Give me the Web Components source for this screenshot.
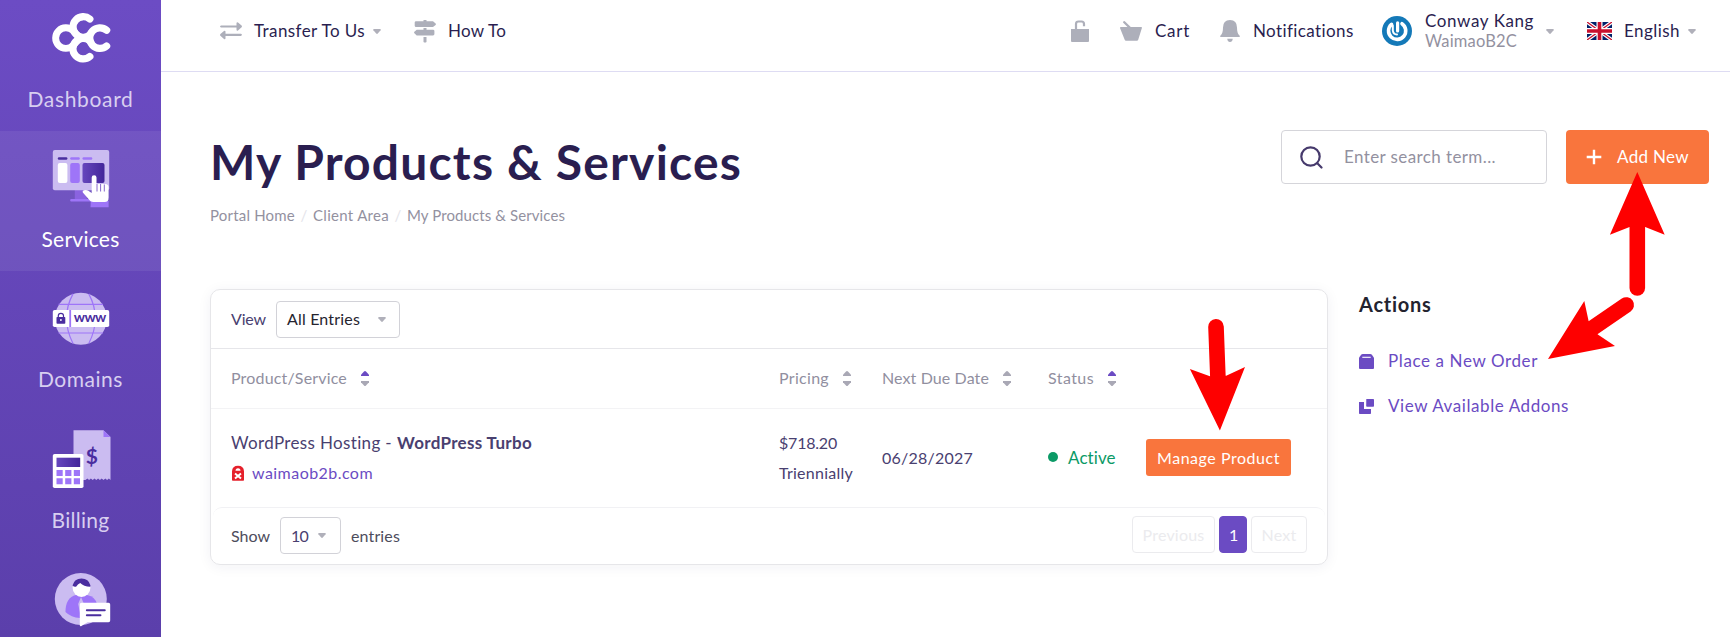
<!DOCTYPE html>
<html lang="en">
<head>
<meta charset="utf-8">
<title>My Products &amp; Services</title>
<style>
  body {
    margin: 0;
    background: #fff;
    font-family: Lato, "Open Sans", sans-serif;
    font-size: 17px;
    color: #2a1e50;
  }
</style>
</head>
<body>
<client-portal></client-portal>

<script>
// Single line of text tracked out to a set width
class UiText extends HTMLElement {
  connectedCallback() {
    this.attachShadow({ mode: 'open' });
    this.shadowRoot.innerHTML = `
      <style>
        :host { display: block; flex: none; line-height: 26px; }
        span { display: inline-block; vertical-align: top; white-space: pre; }
      </style>
      <span><slot></slot></span>
    `;
    const width = parseFloat(this.getAttribute('width'));
    const natural = this.shadowRoot.querySelector('span').getBoundingClientRect().width;
    const count = this.textContent.length;
    this.style.letterSpacing = ((width - natural) / count).toFixed(3) + 'px';
    this.style.width = width + 'px';
  }
}

class UiCaret extends HTMLElement {
  connectedCallback() {
    this.attachShadow({ mode: 'open' });
    this.shadowRoot.innerHTML = `
      <style>
        :host { display: block; flex: none; width: 8px; height: 5px; }
        svg { display: block; }
      </style>
      <svg width="8" height="5" viewBox="0 0 8 5"><path d="M.9 0h6.2q1 .2.5 1.2L4.8 4.5q-.8.8-1.6 0L.4 1.2Q-.1.2.9 0z" fill="#b0b0ba"/></svg>
    `;
  }
}

class SortArrows extends HTMLElement {
  connectedCallback() {
    const up = this.hasAttribute('active') ? '#6b4bc3' : '#a9a8b5';
    this.attachShadow({ mode: 'open' });
    this.shadowRoot.innerHTML = `
      <style>
        :host { display: block; flex: none; width: 8px; height: 15px; }
        svg { display: block; }
      </style>
      <svg width="8" height="15" viewBox="0 0 8 15">
        <path d="M0 5V3.8L3 .6q1-1 2 0l3 3.2V5z" fill="${up}"/>
        <path d="M0 10v1.2l3 3.2q1 1 2 0l3-3.2V10z" fill="#a9a8b5"/>
      </svg>
    `;
  }
}

const navIcons = {
  dashboard: `
    <g fill="none" stroke="#fff" stroke-width="7.3" stroke-linecap="round">
      <path d="M22 21.6A10.3 10.3 0 1 0 22 36.600Q25.800 32.400 29 29.100 25.800 25.800 22 21.600z" stroke-linejoin="round" stroke-width="6.900"/>
      <path d="M38.8 10A10.3 10.3 0 1 0 38.6 26.2"/>
      <path d="M38.6 31.600A10.3 10.3 0 1 0 38.8 47.500"/>
      <path d="M55.6 21.200A10.3 10.3 0 1 0 55.6 37"/>
    </g>`,
  services: `
    <rect x="23.8" y="41" width="12" height="10" fill="#8a63e0"/>
    <rect x="19.2" y="50" width="26" height="2.4" rx="1" fill="#9e75f8"/>
    <rect x="1.8" y="1" width="56.4" height="40.3" rx="2" fill="#cbbcf1"/>
    <rect x="6.8" y="8.2" width="9.6" height="2.6" rx="1.2" fill="#4a2d9f"/>
    <rect x="19.2" y="8.2" width="9.6" height="2.6" rx="1.2" fill="#9e75f8"/>
    <rect x="31.5" y="8.2" width="9.8" height="2.6" rx="1.2" fill="#9e75f8"/>
    <rect x="6.8" y="14" width="9.6" height="20" rx="2" fill="#fff"/>
    <rect x="19.2" y="14" width="9.6" height="20" rx="2" fill="#9e75f8"/>
    <rect x="31.5" y="14" width="22" height="20" rx="2" fill="url(#dark)"/>
    <path d="M39.8 52h17.8v6.3H39.5z" fill="#9e75f8"/>
    <path d="M40.7 28.6a2.4 2.4 0 0 1 4.8 0V35h8.7q3.4.4 3.4 3v10.5q0 4.6-4 4.6H42.5q-3 0-5.4-3.6L31.8 43.5q-.8-1.7 1.2-2.2 3.5-1 5.8 1.5l1.9 1.2z" fill="#fff"/>
    <path d="M46 35v7.5M49.6 35v7.5M53.3 35.5v7" stroke="#7a58c6" stroke-width=".9"/>`,
  domains: `
    <circle cx="29.8" cy="29.7" r="26" fill="#cbbcf1"/>
    <path d="M7.600 15.3h44.400M7.600 44h44.400M22 4.900q-13 24 0 49.600M37.800 4.900q13 24 0 49.600" fill="none" stroke="#9e75f8" stroke-width="1.2"/>
    <rect x="1.8" y="21" width="56.4" height="17" rx="1.8" fill="#fff"/>
    <path d="M19.200 21v17" stroke="#9e75f8" stroke-width="1.8"/>
    <rect x="5.5" y="28" width="8.8" height="6.7" rx=".8" fill="#4a2d9f"/>
    <path d="M7.300 28.500V26.700a2.600 2.400 0 0 1 5.200 0v1.800" fill="none" stroke="#4a2d9f" stroke-width="1.2"/>
    <circle cx="9.9" cy="31" r=".9" fill="#fff"/>
    <text x="22.8" y="32.7" textLength="32.5" font-family="Lato, sans-serif" font-size="14" font-weight="700" fill="#4a2d9f">www</text>`,
  billing: `
    <path d="M22.500.3h30L59.500 7v43l-1.600-1.400-1.800 1.400-1.800-1.400-1.800 1.400-1.800-1.400-1.800 1.400-1.800-1.400-1.800 1.400-1.800-1.400-1.800 1.400-1.800-1.400-1.800 1.400-1.800-1.400-1.800 1.400H22.500z" fill="#cbbcf1"/>
    <path d="M52.500.3v6.700h7z" fill="#9e75f8"/>
    <text x="40.9" y="33.7" text-anchor="middle" font-family="Lato, sans-serif" font-size="21" font-weight="700" fill="#4a2d9f">$</text>
    <rect x="1.8" y="24" width="30.7" height="34" rx="1.8" fill="#fff"/>
    <rect x="5.5" y="27.7" width="23.7" height="9.3" fill="url(#dark)"/>
    <path d="M5.500 40h6.200v6H5.500zm8.700 0h6.200v6h-6.200zm8.600 0H29v6h-6.200zM5.500 48.200h6.200v6H5.500zm8.700 0h6.200v6h-6.200zm8.600 0H29v6h-6.200z" fill="#9e75f8"/>`,
  support: `
    <circle cx="29.8" cy="29" r="26" fill="#cbbcf1"/>
    <path d="M14.500 42q0-14.500 10.500-17h11q9 1.800 10.300 10L29 48Q20 47.500 14.500 42z" fill="#9e75f8"/>
    <path d="M30 27l3 7-3 14-2.800-14z" fill="#cbbcf1"/>
    <circle cx="30.5" cy="18" r="8.9" fill="#fff"/>
    <path d="M21.500 15.500q1.800-6.700 9-6.900 7.200.2 9 6.900l-.3 1.200q-6.500-.2-10-3.700-2.600 1.200-3.900 3.500-2 .8-3.800-1z" fill="#4a2d9f"/>
    <path d="M30.500 32.700h27q1.700.1 1.700 1.700v16.200q0 1.700-1.700 1.700H36.500L30 56.300q-1.200.2-1.200-1V34.400q0-1.600 1.700-1.700z" fill="#fff"/>
    <path d="M35.800 40.300h18M35.800 45.300h13.700" stroke="#4a2d9f" stroke-width="1.9" stroke-linecap="round"/>`
};

class NavItem extends HTMLElement {
  connectedCallback() {
    this.attachShadow({ mode: 'open' });
    this.shadowRoot.innerHTML = `
      <style>
        :host {
          display: flex;
          flex-direction: column;
          align-items: center;
          flex: none;
          box-sizing: border-box;
          height: 139.4px;
          margin-bottom: 1px;
          padding-top: 17.5px;
          font-size: 21px;
          color: #d8cff0;
        }
        :host([active]) { background: rgba(255, 255, 255, .07); color: #fff; }
        svg { display: block; flex: none; margin-bottom: 17px; }
      </style>
      <svg width="60" height="60" viewBox="0 0 60 60">
        <defs><linearGradient id="dark"><stop stop-color="#6647bd"/><stop offset="1" stop-color="#43269a"/></linearGradient></defs>
        ${navIcons[this.getAttribute('icon')]}
      </svg>
      <slot></slot>
    `;
  }
}

class SideNav extends HTMLElement {
  connectedCallback() {
    this.attachShadow({ mode: 'open' });
    this.shadowRoot.innerHTML = `
      <style>
        :host {
          display: flex;
          flex-direction: column;
          height: 637px;
          overflow: hidden;
          background: linear-gradient(#6c4cc4, #5b3fab);
        }
        .first { margin-top: -9px; }
      </style>
      <nav-item class="first" icon="dashboard"><ui-text width="106">Dashboard</ui-text></nav-item>
      <nav-item icon="services" active><ui-text width="78">Services</ui-text></nav-item>
      <nav-item icon="domains"><ui-text width="85">Domains</ui-text></nav-item>
      <nav-item icon="billing"><ui-text width="58">Billing</ui-text></nav-item>
      <nav-item icon="support"></nav-item>
    `;
  }
}

class TopBar extends HTMLElement {
  connectedCallback() {
    this.attachShadow({ mode: 'open' });
    this.shadowRoot.innerHTML = `
      <style>
        :host {
          display: flex;
          align-items: center;
          justify-content: space-between;
          box-sizing: border-box;
          height: 72px;
          padding: 0 34px 9px 59px;
          border-bottom: 1px solid #dedcf3;
        }
        div { display: flex; align-items: center; }
        svg { display: block; flex: none; fill: #adafba; }
        .user { flex-direction: column; align-items: flex-start; }
        .user ui-text { line-height: 20px; }
        .muted { color: #93919f; font-size: 16.5px; }
      </style>
      <div>
        <svg width="22" height="18" viewBox="0 0 22 18">
          <path d="M1 3.400h15.500V1q.3-1.300 1.500-.6l3.600 3.200q.7.900 0 1.600L18 8.400q-1.300.7-1.500-.6V5.600H1Q-.9 4.500 1 3.400zM21 11.700H5.500V9.500q-.3-1.300-1.500-.6L.4 12q-.7.900 0 1.700L4 17q1.200.8 1.500-.5v-2.600H21q1.900-1.100 0-2.200z"/>
        </svg>
        <ui-text width="111" style="margin-left:12px">Transfer To Us</ui-text>
        <ui-caret style="margin-left:8px"></ui-caret>
        <svg style="margin-left:33px" width="22" height="23" viewBox="0 0 22 23">
          <path d="M9.500 0h3v1.300h6.500l2.600 2.200q.7.700 0 1.400L19 7H2Q.7 7 .7 5.700V2.600q0-1.300 1.300-1.300h7.500zM9.500 8h3v1.700H19q1.400 0 1.400 1.400v3q0 1.400-1.400 1.400H2.700L.4 13.200q-.7-.7 0-1.400l2.300-2.100h6.800zM9.500 17h3v5q-1.500 1.200-3 0z"/>
        </svg>
        <ui-text width="58" style="margin-left:12px">How To</ui-text>
      </div>
      <div>
        <svg width="18" height="22" viewBox="0 0 18 22">
          <path d="M0 9h18v12q0 1-1 1H1q-1 0-1-1z"/>
          <path d="M5 9.500V4q0-2.500 2.500-2.500h3q2.500 0 2.500 2.500v2.300" fill="none" stroke="#adafba" stroke-width="2.2"/>
        </svg>
        <svg style="margin-left:31px" width="22" height="20" viewBox="0 0 22 20">
          <path d="M.8 6h6.700L3 1.600Q3-.3 4.800.2L10.800 6h10.400q1 .1.700 1l-3.700 11.800q-.3 1-1.300 1H6q-1 0-1.300-1L0 7q-.1-1 .8-1z"/>
        </svg>
        <ui-text width="35" style="margin-left:13px">Cart</ui-text>
        <svg style="margin-left:30px" width="20" height="22" viewBox="0 0 20 22">
          <path d="M10 0q7 .3 7 7.500c0 4 .8 6.500 2.500 8q.8 1.500-.5 1.500H1q-1.300 0-.5-1.500c1.700-1.500 2.500-4 2.500-8Q3 .3 10 0zM7.300 18.700h5.400q0 3-2.700 3.200-2.700-.2-2.700-3.200z"/>
        </svg>
        <ui-text width="101" style="margin-left:13px">Notifications</ui-text>
        <svg style="margin-left:28px" width="30" height="30" viewBox="0 0 30 30">
          <circle cx="15" cy="15" r="15" fill="#1479b8"/>
          <path d="M9.500 8.300A8.600 8.600 0 1 0 20 7.700" fill="none" stroke="#fff" stroke-width="3.6" stroke-linecap="round"/>
          <path d="M10.800 9.500v5q.5 4 4.200 4" fill="none" stroke="#fff" stroke-width="2" stroke-linecap="round"/>
          <path d="M15.600 6.800v8.200" stroke="#fff" stroke-width="3.2" stroke-linecap="round"/>
        </svg>
        <div class="user" style="margin-left:13px">
          <ui-text width="109">Conway Kang</ui-text>
          <ui-text class="muted" width="92">WaimaoB2C</ui-text>
        </div>
        <ui-caret style="margin-left:12px"></ui-caret>
        <svg style="margin-left:33px" width="25" height="18" viewBox="0 0 25 18">
          <rect width="25" height="18" rx="1.5" fill="#012169"/>
          <path d="M0 0l25 18M25 0L0 18" stroke="#fff" stroke-width="3.6"/>
          <path d="M0 0l25 18M25 0L0 18" stroke="#c8102e" stroke-width="1.3"/>
          <path d="M12.500 0v18M0 9h25" stroke="#fff" stroke-width="6"/>
          <path d="M12.500 0v18M0 9h25" stroke="#c8102e" stroke-width="3.6"/>
        </svg>
        <ui-text width="56" style="margin-left:12px">English</ui-text>
        <ui-caret style="margin-left:8px"></ui-caret>
      </div>
    `;
  }
}

class PageHeader extends HTMLElement {
  connectedCallback() {
    this.attachShadow({ mode: 'open' });
    this.shadowRoot.innerHTML = `
      <style>
        :host {
          display: flex;
          justify-content: space-between;
          padding: 58px 21px 0 49px;
        }
        h1 { margin: 3px 0 0; font-size: 48px; line-height: 58px; }
        h1 ui-text { line-height: 58px; }
        .crumbs { display: flex; margin-top: 11px; font-size: 15px; color: #93919f; }
        .crumbs i { width: 18px; text-align: center; line-height: 26px; font-style: normal; color: #e4e4ea; }
        .tools { display: flex; gap: 19px; }
        .search, .add {
          display: flex;
          align-items: center;
          box-sizing: border-box;
          height: 54px;
          border-radius: 4px;
        }
        .search { width: 266px; padding-left: 18px; border: 1px solid #d5d5da; color: #93919f; gap: 21px; }
        .add { width: 143px; padding-left: 20px; gap: 15px; background: #f9753d; color: #fff; }
        svg { display: block; flex: none; }
      </style>
      <div>
        <h1><ui-text width="532">My Products &amp; Services</ui-text></h1>
        <div class="crumbs">
          <ui-text width="85">Portal Home</ui-text><i>/</i>
          <ui-text width="76">Client Area</ui-text><i>/</i>
          <ui-text width="158">My Products &amp; Services</ui-text>
        </div>
      </div>
      <div class="tools">
        <div class="search">
          <svg width="23" height="23" viewBox="0 0 23 23" fill="none" stroke="#463a6c" stroke-width="2.2" stroke-linecap="round">
            <circle cx="10.5" cy="10.5" r="9.2"/><path d="M17.300 17.300l4.200 4.200"/>
          </svg>
          <ui-text width="152">Enter search term...</ui-text>
        </div>
        <div class="add">
          <svg width="16" height="16" viewBox="0 0 16 16"><path d="M8 .7v14.600M.7 8h14.600" stroke="#fff" stroke-width="2.4"/></svg>
          <ui-text width="72">Add New</ui-text>
        </div>
      </div>
    `;
  }
}

class ProductsCard extends HTMLElement {
  connectedCallback() {
    this.attachShadow({ mode: 'open' });
    this.shadowRoot.innerHTML = `
      <style>
        :host {
          display: block;
          box-sizing: border-box;
          width: 1118px;
          height: 276px;
          border: 1px solid #e6e6e9;
          border-radius: 10px;
          box-shadow: 0 2px 14px rgba(40, 30, 80, .06);
          color: #494070;
          font-size: 16px;
        }
        .bar, .cell, .select, .pages { display: flex; align-items: center; }
        .bar { box-sizing: border-box; padding: 0 19px 0 20px; }
        .top { height: 59px; border-bottom: 1px solid #e6e6ea; }
        .select {
          box-sizing: border-box;
          height: 37px;
          border: 1px solid #d2d2d8;
          border-radius: 4px;
          padding-left: 10px;
        }
        .grid {
          display: grid;
          grid-template-columns: 548px 103px 166px 98px 1fr;
          align-items: center;
          box-sizing: border-box;
          padding-left: 20px;
        }
        .head { height: 60px; padding-bottom: 1px; border-bottom: 1px solid #f3f3f5; color: #918f9f; }
        .head .cell { gap: 14px; }
        .row { height: 98px; }
        .stack { display: flex; flex-direction: column; gap: 4px; }
        .green { color: #0b9a66; }
        .dot { width: 10px; height: 10px; margin: -3px 10px 0 0; border-radius: 50%; background: #0b9a66; }
        .link { color: #6b4bc3; }
        .button {
          display: flex;
          align-items: center;
          justify-content: center;
          width: 145px;
          height: 37px;
          margin-top: -1px;
          border-radius: 3px;
          background: #f9753d;
          color: #fff;
        }
        .foot {
          height: 57px;
          margin: 0 2px;
          padding: 0 18px 1px 18px;
          border-top: 1px solid #f1f1f4;
          border-radius: 9px;
          justify-content: space-between;
          color: #4d4c5c;
        }
        .pages { gap: 4px; margin-top: -2px; color: #ebebee; }
        .pages div {
          display: flex;
          align-items: center;
          justify-content: center;
          box-sizing: border-box;
          height: 37px;
          border: 1px solid #ebebee;
          border-radius: 4px;
        }
        .pages .current { width: 28px; background: #6b4bc3; border-color: #6b4bc3; color: #fff; }
      </style>
      <div class="bar top">
        <ui-text width="35">View</ui-text>
        <div class="select" style="width:124px;margin-left:10px;color:#26242f"><ui-text width="73">All Entries</ui-text><ui-caret style="margin-left:18px"></ui-caret></div>
      </div>
      <div class="grid head">
        <div class="cell"><ui-text width="116">Product/Service</ui-text><sort-arrows active></sort-arrows></div>
        <div class="cell"><ui-text width="50">Pricing</ui-text><sort-arrows></sort-arrows></div>
        <div class="cell"><ui-text width="107">Next Due Date</ui-text><sort-arrows></sort-arrows></div>
        <div class="cell"><ui-text width="46">Status</ui-text><sort-arrows active></sort-arrows></div>
      </div>
      <div class="grid row">
        <div class="stack">
          <div class="cell"><ui-text width="166" style="font-size:17px">WordPress Hosting - </ui-text><ui-text width="135" style="font-size:17px;font-weight:700">WordPress Turbo</ui-text></div>
          <div class="cell link">
            <svg width="14" height="16" viewBox="0 0 14 16" style="margin-right:7px">
              <path d="M1 7V6.300Q1.300.8 7 .8t6 5.500V15q0 .8-.8.800H1.800Q1 15.800 1 15z" fill="#e5202b"/>
              <path d="M4.500 5.800q0-2.600 2.500-2.600t2.500 2.600z" fill="#fff"/>
              <path d="M4 8.400l6 5M10 8.400l-6 5" stroke="#fff" stroke-width="2"/>
            </svg>
            <ui-text width="121">waimaob2b.com</ui-text>
          </div>
        </div>
        <div class="stack"><ui-text width="58">$718.20</ui-text><ui-text width="74">Triennially</ui-text></div>
        <ui-text width="91">06/28/2027</ui-text>
        <div class="cell green"><span class="dot"></span><ui-text width="48" style="font-size:17px">Active</ui-text></div>
        <div class="button"><ui-text width="123">Manage Product</ui-text></div>
      </div>
      <div class="bar foot">
        <div class="cell">
          <ui-text width="39">Show</ui-text>
          <div class="select" style="width:61px;margin:0 10px;color:#494070"><ui-text width="17">10</ui-text><ui-caret style="margin-left:10px"></ui-caret></div>
          <ui-text width="49">entries</ui-text>
        </div>
        <div class="pages">
          <div style="width:83px"><ui-text width="62">Previous</ui-text></div>
          <div class="current"><ui-text width="8">1</ui-text></div>
          <div style="width:56px"><ui-text width="35">Next</ui-text></div>
        </div>
      </div>
    `;
  }
}

class ActionsPanel extends HTMLElement {
  connectedCallback() {
    this.attachShadow({ mode: 'open' });
    this.shadowRoot.innerHTML = `
      <style>
        :host { display: block; }
        h2 { margin: 2px 0 31px; font-size: 20px; line-height: 26px; color: #23232f; }
        div { display: flex; align-items: center; gap: 14px; margin-bottom: 19px; color: #6b4bc3; }
        svg { display: block; fill: #6b4bc3; }
      </style>
      <h2><ui-text width="73">Actions</ui-text></h2>
      <div>
        <svg width="15" height="15" viewBox="0 0 15 15"><path d="M3.800 0h7.400q1 0 1.700.8L15 3.700V14q0 1-1 1H1q-1 0-1-1V3.700L2.100.8Q2.800 0 3.800 0z"/><path d="M3.300 3.300h8.400" stroke="#fff" stroke-width="1.1"/></svg>
        <ui-text width="150">Place a New Order</ui-text>
      </div>
      <div>
        <svg width="15" height="15" viewBox="0 0 15 15"><path d="M0 3h5v7h7v4.200q0 .8-.8.800H.8Q0 15 0 14.200zM7.300 0H14.200q.8 0 .8.800V7q0 .8-.8.800H8Q7.200 7.800 7.200 7z"/></svg>
        <ui-text width="181">View Available Addons</ui-text>
      </div>
    `;
  }
}

// Red pointers laid over the page
class PointerArrows extends HTMLElement {
  connectedCallback() {
    this.attachShadow({ mode: 'open' });
    this.shadowRoot.innerHTML = `
      <style>
        :host { position: absolute; top: 0; left: 0; pointer-events: none; }
        svg { display: block; }
      </style>
      <svg width="1730" height="637" viewBox="0 0 1730 637" fill="#fe0000" stroke="none">
        <path d="M1637.300 172l27.400 62.700-19.500-7.700h-15.600l-19.700 7.700z"/>
        <path d="M1548 359l36.300-58 4.300 20 9.200 13.500 17.200 11.500z"/>
        <path d="M1219.900 430.500l-30-61.500 20 7.300 16.300-.6L1245 367z"/>
        <g stroke="#fe0000" stroke-width="15.6" stroke-linecap="round">
          <path d="M1637.300 222v66"/>
          <path d="M1589 330.500l37.200-25.500"/>
          <path d="M1218 380l-2-53.200"/>
        </g>
      </svg>
    `;
  }
}

class ClientPortal extends HTMLElement {
  connectedCallback() {
    this.attachShadow({ mode: 'open' });
    this.shadowRoot.innerHTML = `
      <style>
        :host {
          display: grid;
          grid-template-columns: 161px 1fr;
          position: relative;
          width: 1730px;
          height: 637px;
          overflow: hidden;
        }
        page-header { height: 159px; }
        .content { display: flex; gap: 31px; padding-left: 49px; }
      </style>
      <side-nav></side-nav>
      <main>
        <top-bar></top-bar>
        <page-header></page-header>
        <div class="content">
          <products-card></products-card>
          <actions-panel></actions-panel>
        </div>
      </main>
      <pointer-arrows></pointer-arrows>
    `;
  }
}

customElements.define('ui-text', UiText);
customElements.define('ui-caret', UiCaret);
customElements.define('sort-arrows', SortArrows);
customElements.define('nav-item', NavItem);
customElements.define('side-nav', SideNav);
customElements.define('top-bar', TopBar);
customElements.define('page-header', PageHeader);
customElements.define('products-card', ProductsCard);
customElements.define('actions-panel', ActionsPanel);
customElements.define('pointer-arrows', PointerArrows);
customElements.define('client-portal', ClientPortal);
</script>
</body>
</html>
